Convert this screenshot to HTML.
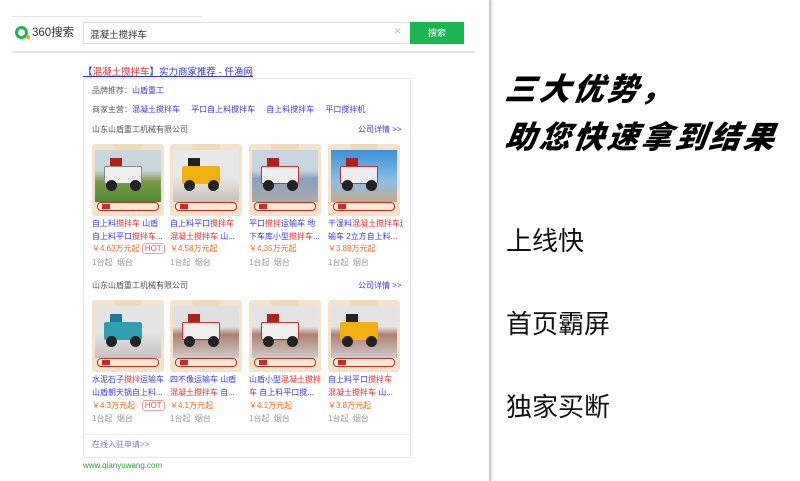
<!DOCTYPE html>
<html><head><meta charset="utf-8">
<style>
*{margin:0;padding:0;box-sizing:border-box}
body{width:800px;height:481px;background:#fff;position:relative;overflow:hidden;font-family:"Liberation Sans","Noto Sans CJK SC",sans-serif}
.a{position:absolute;white-space:nowrap}
.panel{position:absolute;left:0;top:0;width:491px;height:481px;background:#fff;border-right:2px solid #cfcfcf;box-shadow:1px 0 2px #ddd}
.blue{color:#3b3bd8}
.red{color:#e03030}
.or{color:#f06a20}
.g{color:#999}
.img{position:absolute;width:72px;height:72px;background:#f4e3cc;border-radius:3px;overflow:hidden}
.img .sc{position:absolute;left:3px;top:6px;width:66px;height:52px}
.img .tab{position:absolute;left:22px;top:0;width:28px;height:7px;background:#f0d9b8;border-radius:0 0 4px 4px}
.img .ban{position:absolute;left:5px;top:58px;width:62px;height:9px;background:#fbe9d2;border:1px solid #b0302a;border-radius:4px}
.img .ban:before{content:"";position:absolute;left:4px;top:1px;width:8px;height:5px;background:#c0302a}
.img .veh{position:absolute;left:12px;top:22px;width:38px;height:18px;border-radius:2px}
.img .cab{position:absolute;left:18px;top:14px;width:12px;height:10px;background:#b02020}
.img .w1,.img .w2{position:absolute;top:36px;width:11px;height:11px;border-radius:50%;background:#222}
.img .w1{left:14px}.img .w2{left:38px}
.t{font-size:8px;line-height:12.5px}
.c{width:75px;overflow:hidden}
</style></head><body>
<div class="panel">
  <div class="a" style="left:12px;top:16px;width:190px;border-top:1px solid #e6e6e6"></div>
  <div class="a" style="left:15px;top:26px;width:13px;height:13px;border:3px solid #1fb650;border-radius:50%"></div>
  <div class="a" style="left:26px;top:35px;width:4px;height:4px;background:#f7a020;border-radius:50%"></div>
  <div class="a" style="left:32px;top:24px;font-size:11.5px;color:#333">360搜索</div>
  <div class="a" style="left:83px;top:22px;width:328px;height:22px;border:1px solid #ddd"></div>
  <div class="a" style="left:90px;top:27px;font-size:9.5px;color:#333">混凝土搅拌车</div>
  <div class="a" style="left:394px;top:24px;font-size:12px;color:#bbb">×</div>
  <div class="a" style="left:410px;top:22px;width:54px;height:22px;background:#1cb650;color:#fff;font-size:9px;text-align:center;line-height:22px">搜索</div>
  <div class="a" style="left:12px;top:51px;width:463px;border-top:2px solid #e4e4e4"></div>

  <div class="a" style="left:83px;top:64px;font-size:9.5px;color:#3333cc;text-decoration:underline">【<span class="red">混凝土搅拌车</span>】实力商家推荐 - 仟渔网</div>
  <div class="a" style="left:83px;top:78px;width:328px;height:380px;border:1px solid #e8e8e8"></div>
  <div class="a t" style="left:92px;top:85px;color:#666">品牌推荐：<span class="blue">山盾重工</span></div>
  <div class="a t" style="left:92px;top:104px;color:#666">商家主营：<span class="blue">混凝土搅拌车 &nbsp;&nbsp;&nbsp;&nbsp;平口自上料搅拌车 &nbsp;&nbsp;&nbsp;&nbsp;自上料搅拌车 &nbsp;&nbsp;&nbsp;&nbsp;平口搅拌机</span></div>

  <div class="a t" style="left:92px;top:124px;color:#555">山东山盾重工机械有限公司</div>
  <div class="a t blue" style="left:358px;top:124px">公司详情 &gt;&gt;</div>

  <div class="img" style="left:92px;top:144px"><div class="tab"></div><div class="sc" style="background:linear-gradient(#c9d6dc 40%,#7a9a4a 60%,#4a8a30)"></div><div class="cab"></div><div class="veh" style="background:#eee;border:1px solid #888"></div><div class="w1"></div><div class="w2"></div><div class="ban"></div></div>
  <div class="img" style="left:170px;top:144px"><div class="tab"></div><div class="sc" style="background:linear-gradient(#e8e8e8 50%,#c8c0b8)"></div><div class="cab" style="background:#222"></div><div class="veh" style="background:#f0b010"></div><div class="w1"></div><div class="w2"></div><div class="ban"></div></div>
  <div class="img" style="left:249px;top:144px"><div class="tab"></div><div class="sc" style="background:linear-gradient(#c8d4e0 40%,#8aa0c0 55%,#aaa)"></div><div class="cab"></div><div class="veh" style="background:#eee;border:1px solid #b33"></div><div class="w1"></div><div class="w2"></div><div class="ban"></div></div>
  <div class="img" style="left:328px;top:144px"><div class="tab"></div><div class="sc" style="background:linear-gradient(#3a90d8,#8ac0e8 60%,#c8a888)"></div><div class="cab"></div><div class="veh" style="background:#eee;border:1px solid #b33"></div><div class="w1"></div><div class="w2"></div><div class="ban"></div></div>

  <div class="a t blue c" style="left:92px;top:218px">自上料<span class="red">搅拌车</span> 山盾<br>自上料平口<span class="red">搅拌车</span>...</div>
  <div class="a t blue c" style="left:170px;top:218px">自上料平口<span class="red">搅拌车</span><br><span class="red">混凝土搅拌车</span> 山...</div>
  <div class="a t blue c" style="left:249px;top:218px">平口<span class="red">搅拌</span>运输车 地<br>下车库小型<span class="red">搅拌车</span>...</div>
  <div class="a t blue c" style="left:328px;top:218px">干湿料<span class="red">混凝土搅拌车</span>运<br>输车 2立方自上料...</div>
  <div class="a t or" style="left:92px;top:243px">￥4.63万元起 <span style="border:1px solid #f0a0a0;border-radius:3px;padding:0 2px;color:#e55">HOT</span></div>
  <div class="a t or" style="left:170px;top:243px">￥4.58万元起</div>
  <div class="a t or" style="left:249px;top:243px">￥4.35万元起</div>
  <div class="a t or" style="left:328px;top:243px">￥3.88万元起</div>
  <div class="a t g" style="left:92px;top:257px">1台起 &nbsp;烟台</div>
  <div class="a t g" style="left:170px;top:257px">1台起 &nbsp;烟台</div>
  <div class="a t g" style="left:249px;top:257px">1台起 &nbsp;烟台</div>
  <div class="a t g" style="left:328px;top:257px">1台起 &nbsp;烟台</div>

  <div class="a t" style="left:92px;top:280px;color:#555">山东山盾重工机械有限公司</div>
  <div class="a t blue" style="left:358px;top:280px">公司详情 &gt;&gt;</div>

  <div class="img" style="left:92px;top:300px"><div class="tab"></div><div class="sc" style="background:linear-gradient(#e4e4e4 50%,#c8c0c0)"></div><div class="cab" style="background:#1e7a9a"></div><div class="veh" style="background:#30a0b0"></div><div class="w1"></div><div class="w2"></div><div class="ban"></div></div>
  <div class="img" style="left:170px;top:300px"><div class="tab"></div><div class="sc" style="background:linear-gradient(#e0e0e0 40%,#b08070 55%,#ccc)"></div><div class="cab"></div><div class="veh" style="background:#eee;border:1px solid #b33"></div><div class="w1"></div><div class="w2"></div><div class="ban"></div></div>
  <div class="img" style="left:249px;top:300px"><div class="tab"></div><div class="sc" style="background:linear-gradient(#e4e4e4 40%,#b08070 55%,#ccc)"></div><div class="cab"></div><div class="veh" style="background:#eee;border:1px solid #b33"></div><div class="w1"></div><div class="w2"></div><div class="ban"></div></div>
  <div class="img" style="left:328px;top:300px"><div class="tab"></div><div class="sc" style="background:linear-gradient(#e4e4e4 40%,#b08070 55%,#ccc)"></div><div class="cab" style="background:#222"></div><div class="veh" style="background:#f0b010"></div><div class="w1"></div><div class="w2"></div><div class="ban"></div></div>

  <div class="a t blue c" style="left:92px;top:374px">水泥石子<span class="red">搅拌</span>运输车<br>山盾朝天锅自上料...</div>
  <div class="a t blue c" style="left:170px;top:374px">四不像运输车 山盾<br><span class="red">混凝土搅拌车</span> 自...</div>
  <div class="a t blue c" style="left:249px;top:374px">山盾小型<span class="red">混凝土搅拌</span><br><span class="red">车</span> 自上料平口搅...</div>
  <div class="a t blue c" style="left:328px;top:374px">自上料平口<span class="red">搅拌车</span><br><span class="red">混凝土搅拌车</span> 山...</div>
  <div class="a t or" style="left:92px;top:400px">￥4.3万元起 &nbsp;&nbsp;<span style="border:1px solid #f0a0a0;border-radius:3px;padding:0 2px;color:#e55">HOT</span></div>
  <div class="a t or" style="left:170px;top:400px">￥4.1万元起</div>
  <div class="a t or" style="left:249px;top:400px">￥4.1万元起</div>
  <div class="a t or" style="left:328px;top:400px">￥3.8万元起</div>
  <div class="a t g" style="left:92px;top:413px">1台起 &nbsp;烟台</div>
  <div class="a t g" style="left:170px;top:413px">1台起 &nbsp;烟台</div>
  <div class="a t g" style="left:249px;top:413px">1台起 &nbsp;烟台</div>
  <div class="a t g" style="left:328px;top:413px">1台起 &nbsp;烟台</div>

  <div class="a" style="left:84px;top:434px;width:326px;border-top:1px solid #eee"></div>
  <div class="a t" style="left:92px;top:439px;color:#7a7ad0">在线入驻申请&gt;&gt;</div>
  <div class="a t" style="left:83px;top:460px;color:#3a9a3a">www.qianyuwang.com</div>
</div>

<div class="a" style="left:506px;top:64px;font-size:31px;font-weight:900;font-style:italic;letter-spacing:3px;color:#000;transform:skewX(-8deg)">三大优势，</div>
<div class="a" style="left:506px;top:112px;font-size:31px;font-weight:900;font-style:italic;letter-spacing:3px;color:#000;transform:skewX(-8deg)">助您快速拿到结果</div>
<div class="a" style="left:506px;top:221px;font-size:26px;color:#111">上线快</div>
<div class="a" style="left:506px;top:304px;font-size:26px;color:#111">首页霸屏</div>
<div class="a" style="left:506px;top:387px;font-size:26px;color:#111">独家买断</div>
</body></html>
